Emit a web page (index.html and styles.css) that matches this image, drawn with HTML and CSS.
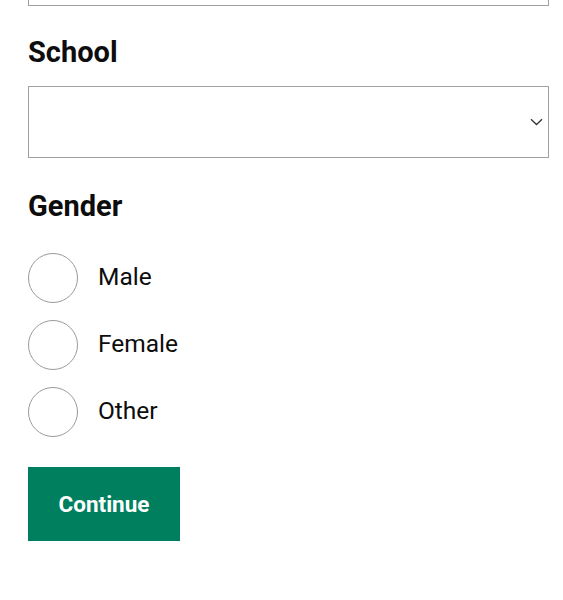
FILE: index.html
```html
<!DOCTYPE html>
<html>
<head>
<meta charset="utf-8">
<link rel="stylesheet" href="styles.css">
</head>
<body>
<form class="form">
  <div class="field field-top"></div>

  <div class="group">
    <h2 class="label">School</h2>
    <div class="select">
      <svg class="chevron" width="13" height="8" viewBox="0 0 13 8"><path d="M1 1.2 L6.5 6.5 L12 1.2" fill="none" stroke="#333" stroke-width="1.3"/></svg>
    </div>
  </div>

  <div class="group gender">
    <h2 class="label">Gender</h2>
    <div class="radios">
      <label class="radio"><span class="circle"></span><span class="radio-text">Male</span></label>
      <label class="radio"><span class="circle"></span><span class="radio-text">Female</span></label>
      <label class="radio"><span class="circle"></span><span class="radio-text">Other</span></label>
    </div>
  </div>

  <button type="button" class="btn">Continue</button>
</form>
</body>
</html>
```

FILE: styles.css
```css
html, body {
  margin: 0;
  padding: 0;
  background: #fff;
}
body {
  font-family: Roboto, "Liberation Sans", sans-serif;
  color: #111;
  overflow: hidden;
}
.form {
  padding: 0 14px 0 28px;
  display: flex;
  flex-direction: column;
}
.field {
  border: 1px solid #a0a0a0;
  box-sizing: border-box;
  height: 72px;
}
.field-top {
  margin-top: -66px;
}
.group {
  display: flex;
  flex-direction: column;
}
.label {
  margin: 29px 0 0 0;
  font-size: 29px;
  line-height: 34px;
  font-weight: 700;
  color: #0d0d0d;
}
.select {
  margin-top: 17px;
  height: 72px;
  box-sizing: border-box;
  border: 1px solid #a0a0a0;
  display: flex;
  align-items: center;
  justify-content: flex-end;
  padding-right: 5px;
}
.chevron {
  display: block;
}
.gender .label {
  margin-top: 31px;
}
.radios {
  margin-top: 30px;
  display: flex;
  flex-direction: column;
  gap: 17px;
}
.radio {
  display: flex;
  align-items: center;
  height: 50px;
}
.circle {
  width: 50px;
  height: 50px;
  box-sizing: border-box;
  border: 1px solid #9a9a9a;
  border-radius: 50%;
  flex: none;
}
.radio-text {
  margin-left: 20px;
  padding-bottom: 4px;
  font-size: 24.5px;
  color: #0d0d0d;
}
.btn {
  margin-top: 30px;
  align-self: flex-start;
  width: 152px;
  height: 74px;
  border: none;
  background: #007f5f;
  color: #fff;
  font-family: Roboto, "Liberation Sans", sans-serif;
  font-size: 22.5px;
  font-weight: 700;
  padding: 0;
}
```
